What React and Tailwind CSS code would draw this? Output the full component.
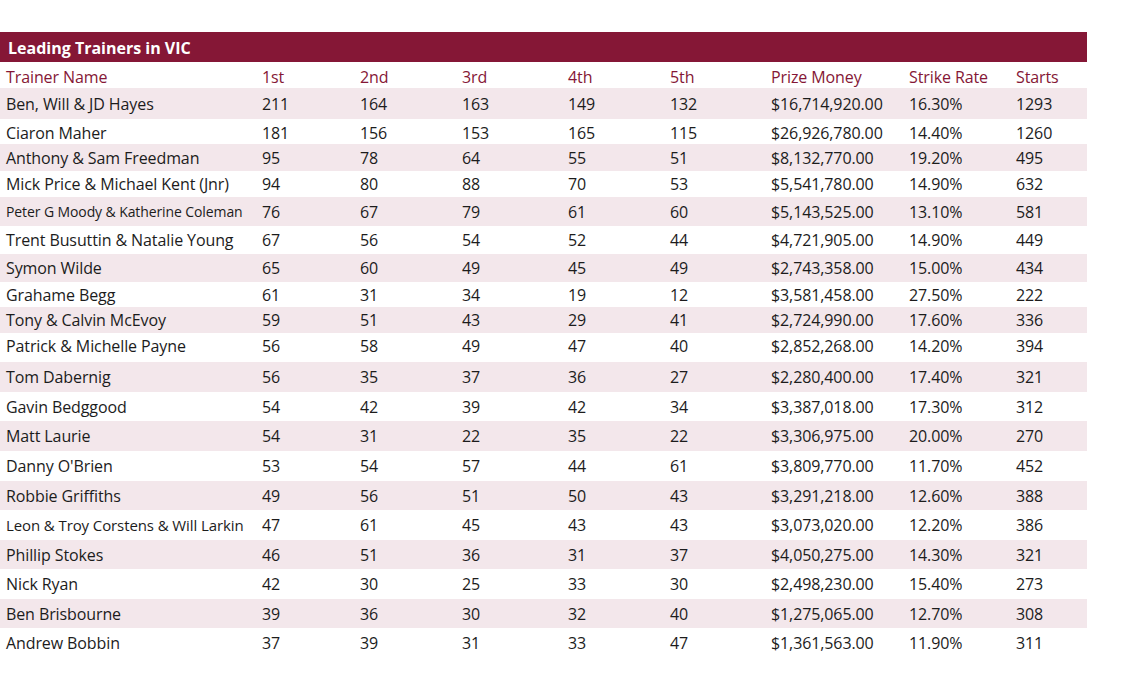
import React from 'react'

const rows = [
  ['Ben, Will & JD Hayes', 211, 164, 163, 149, 132, '$16,714,920.00', '16.30%', 1293, 'h-[31px]'],
  ['Ciaron Maher', 181, 156, 153, 165, 115, '$26,926,780.00', '14.40%', 1260, 'h-[25px] pt-[2px]'],
  ['Anthony & Sam Freedman', 95, 78, 64, 55, 51, '$8,132,770.00', '19.20%', 495, 'h-[27px]'],
  ['Mick Price & Michael Kent (Jnr)', 94, 80, 88, 70, 53, '$5,541,780.00', '14.90%', 632, 'h-[26px]'],
  ['Peter G Moody & Katherine Coleman', 76, 67, 79, 61, 60, '$5,143,525.00', '13.10%', 581, 'h-[29px]', 'small'],
  ['Trent Busuttin & Natalie Young', 67, 56, 54, 52, 44, '$4,721,905.00', '14.90%', 449, 'h-[28px]'],
  ['Symon Wilde', 65, 60, 49, 45, 49, '$2,743,358.00', '15.00%', 434, 'h-[28px]'],
  ['Grahame Begg', 61, 31, 34, 19, 12, '$3,581,458.00', '27.50%', 222, 'h-[25px]'],
  ['Tony & Calvin McEvoy', 59, 51, 43, 29, 41, '$2,724,990.00', '17.60%', 336, 'h-[26px]'],
  ['Patrick & Michelle Payne', 56, 58, 49, 47, 40, '$2,852,268.00', '14.20%', 394, 'h-[29px] pb-[3px]'],
  ['Tom Dabernig', 56, 35, 37, 36, 27, '$2,280,400.00', '17.40%', 321, 'h-[30px]'],
  ['Gavin Bedggood', 54, 42, 39, 42, 34, '$3,387,018.00', '17.30%', 312, 'h-[29px]'],
  ['Matt Laurie', 54, 31, 22, 35, 22, '$3,306,975.00', '20.00%', 270, 'h-[30px]'],
  ["Danny O'Brien", 53, 54, 57, 44, 61, '$3,809,770.00', '11.70%', 452, 'h-[30px]'],
  ['Robbie Griffiths', 49, 56, 51, 50, 43, '$3,291,218.00', '12.60%', 388, 'h-[29px]'],
  ['Leon & Troy Corstens & Will Larkin', 47, 61, 45, 43, 43, '$3,073,020.00', '12.20%', 386, 'h-[30px]', 'mid'],
  ['Phillip Stokes', 46, 51, 36, 31, 37, '$4,050,275.00', '14.30%', 321, 'h-[29px]'],
  ['Nick Ryan', 42, 30, 25, 33, 30, '$2,498,230.00', '15.40%', 273, 'h-[30px]'],
  ['Ben Brisbourne', 39, 36, 30, 32, 40, '$1,275,065.00', '12.70%', 308, 'h-[29px]'],
  ['Andrew Bobbin', 37, 39, 31, 33, 47, '$1,361,563.00', '11.90%', 311, 'h-[29px]'],
]

const heads = ['Trainer Name', '1st', '2nd', '3rd', '4th', '5th', 'Prize Money', 'Strike Rate', 'Starts']

const grid = 'grid grid-cols-[256px_98px_102px_106px_102px_101px_138px_107px_77px] items-center'

export default function App() {
  return (
    <div className="w-[1131px] h-[697px] bg-white pt-[32px] font-['Open_Sans',sans-serif] text-[16px] tracking-[-0.1px] text-[#1c1c1c]">
      <div className="w-[1087px]">
        {/* Title */}
        <div className="h-[30px] bg-[#851736] flex items-center pl-[8px] pt-[1px]">
          <span className="text-white font-bold text-[16px] tracking-[0px]">Leading Trainers in VIC</span>
        </div>

        {/* Header */}
        <div className={grid + ' h-[26px] pt-[3px] text-[#851736]'}>
          {heads.map((h) => (
            <div key={h} className="pl-[6px] whitespace-nowrap">{h}</div>
          ))}
        </div>

        {/* Body */}
        {rows.map((r, i) => {
          const nameSize = r[10] === 'small' ? 'text-[14px]' : r[10] === 'mid' ? 'text-[15px]' : ''
          return (
            <div key={r[0]} className={grid + ' ' + r[9] + (i % 2 === 0 ? ' bg-[#f3e7eb]' : ' bg-white')}>
              <div className={'pl-[6px] whitespace-nowrap ' + nameSize}>{r[0]}</div>
              {r.slice(1, 9).map((c, j) => (
                <div key={j} className="pl-[6px] whitespace-nowrap">{c}</div>
              ))}
            </div>
          )
        })}
      </div>
    </div>
  )
}
